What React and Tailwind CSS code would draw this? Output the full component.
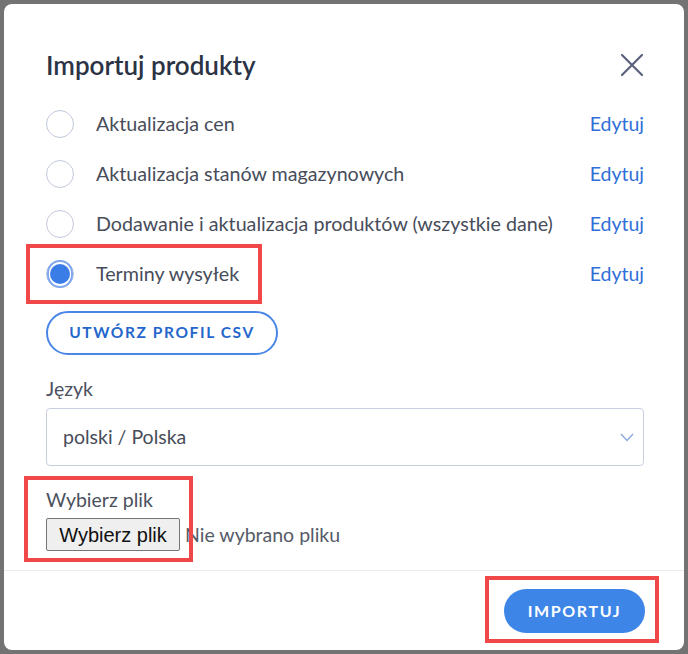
import React, { useState } from 'react';

const font = { fontFamily: 'Lato, "Open Sans", sans-serif' };

const options = [
  'Aktualizacja cen',
  'Aktualizacja stanów magazynowych',
  'Dodawanie i aktualizacja produktów (wszystkie dane)',
  'Terminy wysyłek',
];

const Radio = ({ checked }) => (
  <span className="w-[28px] h-[28px] rounded-full border border-[#c3c8db] flex items-center justify-center shrink-0 bg-white">
    {checked && (
      <span className="w-[28px] h-[28px] rounded-full border-2 border-[#7fa8ee] flex items-center justify-center">
        <span className="w-[20px] h-[20px] rounded-full bg-[#3a7de6]" />
      </span>
    )}
  </span>
);

const OptionRow = ({ label, checked, onSelect }) => (
  <div className="h-[50px] flex items-center" onClick={onSelect}>
    <Radio checked={checked} />
    <span className="ml-[22px] text-[19.7px] text-[#474d5a] flex-1">{label}</span>
    <a className="text-[19.5px] text-[#2f6fd8]">Edytuj</a>
  </div>
);

export default function App() {
  const [selected, setSelected] = useState(3);

  return (
    <div className="relative w-[688px] h-[654px] bg-[#737373] p-[4px]" style={font}>
      <div className="h-full bg-white rounded-[8px] flex flex-col overflow-hidden">
        <div className="flex-1 pl-[42px] pr-[40px] pt-[42px]">
          <div className="flex items-center justify-between h-[38px]">
            <h2 className="text-[26px] font-semibold text-[#2b3344]">Importuj produkty</h2>
            <svg width="24" height="24" viewBox="0 0 24 24">
              <path d="M2 2 L22 22 M22 2 L2 22" stroke="#59627a" strokeWidth="2.2" strokeLinecap="round" />
            </svg>
          </div>

          <div className="mt-[15px]">
            {options.map((o, i) => (
              <OptionRow key={o} label={o} checked={selected === i} onSelect={() => setSelected(i)} />
            ))}
          </div>

          <button className="mt-[12px] h-[44px] w-[232px] rounded-full border-2 border-[#4a86e8] text-[#2566cc] font-bold text-[15.5px] tracking-[1.6px]">
            UTWÓRZ PROFIL CSV
          </button>

          <div className="mt-[22px] text-[19.5px] text-[#4b515e] leading-[24px]">Język</div>
          <div className="mt-[7px] h-[58px] border border-[#c8cde0] rounded-[4px] flex items-center justify-between pl-[16px] pr-[9px]">
            <span className="text-[19.5px] text-[#474d5a]">polski / Polska</span>
            <svg width="14" height="9" viewBox="0 0 14 9">
              <path d="M1 1 L7 7.5 L13 1" fill="none" stroke="#8ba7da" strokeWidth="1.3" />
            </svg>
          </div>

          <div className="mt-[22px] text-[19.5px] text-[#4b515e] leading-[24px]">Wybierz plik</div>
          <div className="mt-[6px] flex items-center">
            <span
              className="h-[33px] w-[134px] flex items-center justify-center bg-[#efefef] border border-[#767676] rounded-[2px] text-[20px] text-[#111]"
              style={{ fontFamily: '"Liberation Sans", Arial, sans-serif' }}
            >
              Wybierz plik
            </span>
            <span className="ml-[5px] text-[19.5px] text-[#555b67]">Nie wybrano pliku</span>
          </div>
        </div>

        <div className="h-[80px] border-t border-[#ebebeb] flex items-center justify-end pr-[39px]">
          <button className="h-[44px] w-[141px] rounded-full bg-[#3d86e8] text-white font-bold text-[16px] tracking-[1.6px]">
            IMPORTUJ
          </button>
        </div>
      </div>

      {/* annotation frames */}
      <div className="absolute left-[26px] top-[244px] w-[236px] h-[60px] border-[4px] border-[#f04848]" />
      <div className="absolute left-[24px] top-[476px] w-[169px] h-[86px] border-[4px] border-[#f04848]" />
      <div className="absolute left-[485px] top-[576px] w-[174px] h-[67px] border-[4px] border-[#f04848]" />
    </div>
  );
}
